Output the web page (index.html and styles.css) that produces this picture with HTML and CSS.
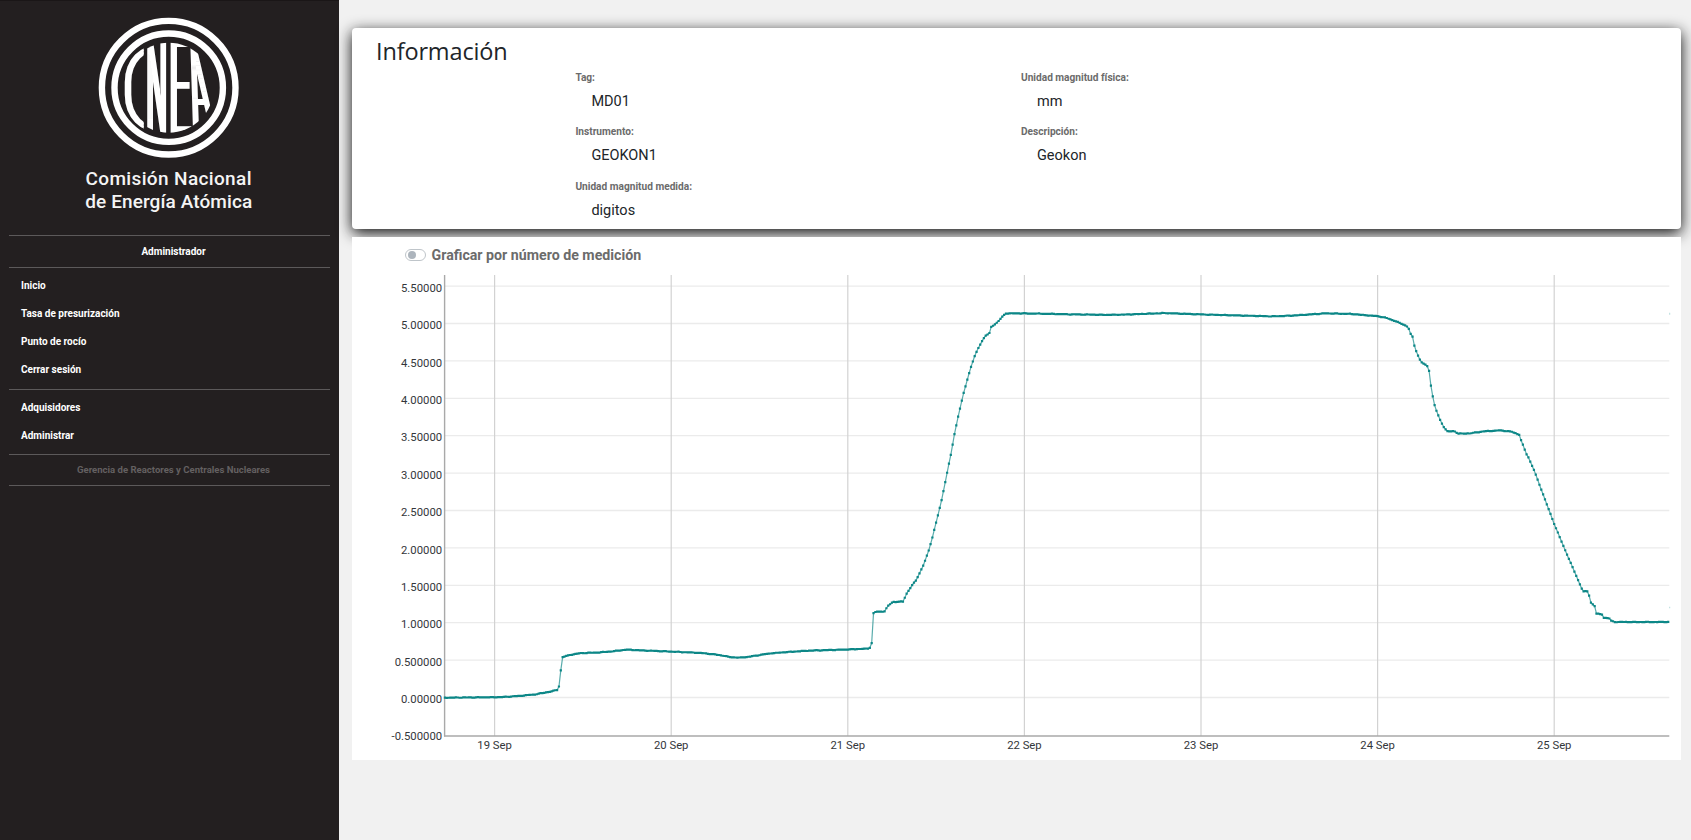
FILE: index.html
```html
<!DOCTYPE html>
<html lang="es">
<head>
<meta charset="utf-8">
<title>Información</title>
<link rel="stylesheet" href="styles.css">
</head>
<body>
<div class="app">
  <aside class="sidebar">
    <svg class="logo" viewBox="0 0 339 235" width="339" height="235" role="img" aria-label="Comisión Nacional de Energía Atómica">
      <defs>
        <clipPath id="disc"><circle cx="168.7" cy="87.7" r="45"/></clipPath>
        <clipPath id="leftPart"><rect x="120" y="40" width="23.7" height="96"/></clipPath>
        <filter id="widen" x="-20%" y="-5%" width="140%" height="110%"><feMorphology operator="dilate" radius="2 0"/></filter>
      </defs>
      <circle class="ring" cx="168.7" cy="87.7" r="66.8"/>
      <circle class="ring" cx="168.7" cy="87.7" r="54.2"/>
      <g clip-path="url(#leftPart)">
        <text class="mono-round" transform="translate(115.9 130.6) scale(1.22 1)">C</text>
      </g>
      <g clip-path="url(#disc)">
        <g filter="url(#widen)">
          <text class="mono" transform="translate(146.8 132.7) scale(.28 1.29)">N</text>
          <text class="mono" transform="translate(169.2 132.7) scale(.38 1.29)">E</text>
          <text class="mono" transform="translate(194.6 128) skewX(7.5) scale(.31 1.16)">A</text>
        </g>
      </g>
      <text class="logo-name" x="85.5" y="185.3" textLength="166" lengthAdjust="spacing">Comisión Nacional</text>
      <text class="logo-name" x="85.2" y="208" textLength="167" lengthAdjust="spacing">de Energía Atómica</text>
    </svg>
    <nav class="side-body">
      <p class="side-role">Administrador</p>
      <ul class="menu">
        <li>Inicio</li>
        <li>Tasa de presurización</li>
        <li>Punto de rocío</li>
        <li>Cerrar sesión</li>
      </ul>
      <ul class="menu menu-admin">
        <li>Adquisidores</li>
        <li>Administrar</li>
      </ul>
      <p class="side-foot">Gerencia de Reactores y Centrales Nucleares</p>
    </nav>
  </aside>
  <main class="main">
    <section class="info">
      <h1 class="info-title">Información</h1>
      <dl class="fields">
        <div class="field"><dt>Tag:</dt><dd>MD01</dd></div>
        <div class="field"><dt>Unidad magnitud física:</dt><dd>mm</dd></div>
        <div class="field"><dt>Instrumento:</dt><dd>GEOKON1</dd></div>
        <div class="field"><dt>Descripción:</dt><dd>Geokon</dd></div>
        <div class="field"><dt>Unidad magnitud medida:</dt><dd>digitos</dd></div>
      </dl>
    </section>
    <section class="panel">
      <div class="toggle"><span class="switch"><span class="knob"></span></span><span>Graficar por número de medición</span></div>
      <svg class="chart" id="chart" viewBox="352 270 1329 489" width="1329" height="489"></svg>
    </section>
  </main>
</div>
<script src="chart.js"></script>
</body>
</html>
```

FILE: styles.css
```css
* { box-sizing: border-box; }
body {
  margin: 0;
  background: #f1f1f1;
  font-family: Roboto, "Liberation Sans", sans-serif;
  color: #212529;
}
.app { display: flex; height: 840px; overflow: hidden; }

.sidebar {
  flex: none;
  width: 339px;
  background: #231f20;
  border-top: 1px solid #1a1617;
  color: #fff;
  font-size: 10px;
  font-weight: 700;
}
.logo { display: block; margin-top: -1px; }
.ring { fill: none; stroke: #fff; stroke-width: 6.4; }
.mono { font: 300 100px Roboto, sans-serif; fill: #fff; }
.mono-round { font: 100 118px Roboto, sans-serif; fill: #fff; stroke: #fff; stroke-width: 2.2; }
.logo-name { font: 500 19px Roboto, sans-serif; fill: #f4f4f4; }

.side-body { margin: 0 9px; border-top: 1px solid #5c595a; }
.side-role, .side-foot {
  margin: 0;
  padding-left: 8px;
  text-align: center;
  border-bottom: 1px solid #5c595a;
}
.side-role { height: 32px; line-height: 31px; }
.side-foot { height: 31px; line-height: 30px; font-size: 9.55px; color: #636061; }
.menu {
  list-style: none;
  margin: 0;
  height: 122px;
  padding: 4.4px 12px 0;
  line-height: 27.85px;
  border-bottom: 1px solid #5c595a;
}
.menu-admin { height: 65px; padding-top: 3.9px; }

.main { flex: 1; padding: 28px 10px 0 13px; }
.info {
  height: 201px;
  padding: 5px 24px 0;
  background: #fff;
  border-radius: 4px;
  box-shadow: 0 4px 15px rgba(0, 0, 0, .95);
}
.info-title {
  margin: 0;
  font: 500 23.5px/36px "Open Sans", "Noto Sans", sans-serif;
  letter-spacing: -.15px;
}
.fields {
  display: grid;
  grid-template-columns: 445.6px 446px;
  grid-auto-rows: 54.3px;
  margin: 0 0 0 199.4px;
}
.field dt { font-size: 10.15px; font-weight: 700; line-height: 18px; color: #6b6b6b; }
.field dd { margin: 0 0 0 16px; font-size: 14.5px; line-height: 30.4px; }

.panel {
  position: relative;
  height: 522.5px;
  margin-top: 8px;
  background: #fff;
}
.toggle {
  display: flex;
  align-items: center;
  gap: 5.5px;
  height: 33px;
  padding: 3px 0 0 53px;
  font-size: 14.2px;
  font-weight: 700;
  color: #6b6b6b;
}
.switch {
  width: 21px;
  height: 12px;
  padding: 1.5px;
  margin-top: -1px;
  border: 1px solid #bfc5ca;
  border-radius: 6px;
}
.knob { display: block; width: 8px; height: 8px; margin-top: -.5px; border-radius: 50%; background: #adb5bd; }

.chart { display: block; }
.chart text { font-size: 11.3px; fill: #33363a; }
.y-label { text-anchor: end; }
.x-label { text-anchor: middle; }
.grid-h { stroke: #ebebeb; stroke-width: 1.3; }
.grid-v { stroke: #d2d2d2; stroke-width: 1.2; }
.axis { stroke: #a9a9a9; stroke-width: 1.4; }
.line { fill: none; stroke: #008080; stroke-width: 1.2; stroke-opacity: .65; }
.dots { fill: #0c8787; }
```

FILE: chart.js
```js
const svg = document.getElementById('chart');
const NS = 'http://www.w3.org/2000/svg';
function add(tag, attrs, text) {
  const el = document.createElementNS(NS, tag);
  for (const k in attrs) el.setAttribute(k, attrs[k]);
  if (text) el.textContent = text;
  svg.appendChild(el);
}

const values = ['5.50000', '5.00000', '4.50000', '4.00000', '3.50000', '3.00000', '2.50000',
  '2.00000', '1.50000', '1.00000', '0.500000', '0.00000', '-0.500000'];
values.forEach((v, i) => {
  const y = 286.1 + i * 37.4;
  if (i < 12) add('line', { class: 'grid-h', x1: 445, x2: 1669.3, y1: y, y2: y });
  add('text', { class: 'y-label', x: 442.1, y: 292 + i * 37.36 }, v);
});
['19 Sep', '20 Sep', '21 Sep', '22 Sep', '23 Sep', '24 Sep', '25 Sep'].forEach((d, i) => {
  const x = 494.6 + i * 176.6;
  add('line', { class: 'grid-v', x1: x, x2: x, y1: 275, y2: 736 });
  add('text', { class: 'x-label', x: x, y: 749 }, d);
});
add('line', { class: 'axis', x1: 444.6, x2: 444.6, y1: 275, y2: 736.5 });
add('line', { class: 'axis', x1: 444, x2: 1669.3, y1: 736, y2: 736 });

const curve = [
  [444.5,698.3],[500,697.8],[520,696.5],[535,695],[550,692.3],[557.3,690.5],[558.8,688.3],[560.7,671.7],
  [562.4,657.8],[570,655.5],[580,653.8],[600,653],[612,652],[627,650.2],[640,651],[660,651.7],[680,652.6],
  [700,653.5],[712,654.7],[722,656],[730,657.7],[740,658.3],[750,657.2],[770,654],[790,652.5],[810,651.2],
  [845,650.2],[868,649.2],[871.5,647.3],[873.2,614],[875.5,612.5],[884.5,612],[888,606.5],[893,602.5],
  [903,602.2],[907,593.5],[912,586],[916,581],[923,566.7],[928.3,552.7],[932.3,538.3],[937.7,516.7],
  [941.3,502.3],[946.7,475.3],[950.7,456],[954.3,435.7],[958,417.7],[963.3,395],[967,381.3],[970.7,368.3],
  [974.3,357.7],[978,349.3],[981.7,342.3],[985.3,336.3],[989.3,334.3],[991,327.7],[997.7,322.7],
  [1002.3,317.3],[1006,314],[1024,314],[1050,314.5],[1073,315],[1110,315.5],[1130,315],[1165,313.7],
  [1200,315],[1272,317],[1296,316],[1325,314],[1350,314.5],[1378,316.8],[1387,318.7],[1396.7,322.3],
  [1406.7,326.7],[1408.7,329],[1410.3,334.3],[1412.3,336.3],[1414,345],[1416,351],[1418,356],[1419.7,360],
  [1421.3,362.7],[1427.3,366.7],[1429,370.7],[1430.7,384.7],[1432.7,396.7],[1434.3,405],[1436.3,411],
  [1440,420.3],[1443.7,427.3],[1447,432],[1454.3,431.7],[1458.3,434.3],[1470,434],[1483.3,432],[1500,431],
  [1511.7,432.3],[1519.2,435.3],[1521,440.7],[1526.3,454.3],[1528.3,457.7],[1534,470.7],[1541,489.3],
  [1548.7,510],[1554.3,524.7],[1563,545.7],[1572.3,567.3],[1583,592],[1587.3,592],[1589,595.7],
  [1591,603.3],[1594.7,606.7],[1596.3,614.3],[1602.3,615],[1603.7,618.3],[1609.3,619],[1611,621.3],
  [1615,622.6],[1669,622.6]
];

// One sample every 15 minutes, with a small sensor ripple on the flat stretches
const step = 176.6 / 96;
const pts = [];
for (let k = 0, i = 0; i < curve.length - 1; k++) {
  const x = 444.9 + k * step;
  while (i < curve.length - 1 && curve[i + 1][0] < x) {
    i++;
    if (i >= curve.length - 1) break;
  }
  if (i >= curve.length - 1) break;
  const [x0, y0] = curve[i], [x1, y1] = curve[i + 1];
  const ripple = Math.sin(k * 1.3) * Math.cos(k * 0.37) * 0.25;
  pts.push([x, y0 + (y1 - y0) * (x - x0) / (x1 - x0) + ripple - 0.6]);
}
add('polyline', { class: 'line', points: pts.map(p => p[0].toFixed(2) + ',' + p[1].toFixed(2)).join(' ') });
add('path', {
  class: 'dots',
  d: pts.map(p => `M${(p[0] - 1.1).toFixed(2)} ${(p[1] - 1.1).toFixed(2)}h2.2v2.2h-2.2z`).join('')
});
add('path', { class: 'dots', opacity: 0.3, d: 'M1669.2 312.7h1v2h-1zM1669.2 606.7h1v1.6h-1z' });
```
